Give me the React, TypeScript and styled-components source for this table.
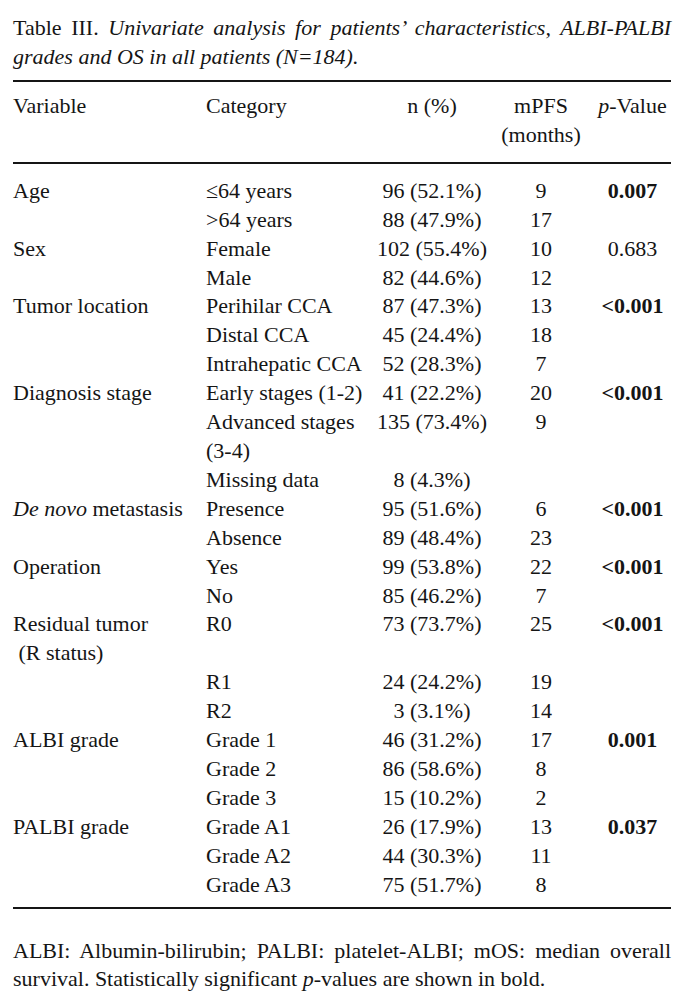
import React from 'react';
import styled, { createGlobalStyle } from 'styled-components';

const GlobalStyle = createGlobalStyle`
  html, body {
    margin: 0;
    padding: 0;
    background: #ffffff;
  }
  body {
    font-family: "Liberation Serif", "Times New Roman", serif;
    color: #151515;
  }
`;

interface Row {
  category: React.ReactNode;
  n: string;
  mpfs: string;
}

interface Group {
  variable: React.ReactNode;
  p?: string;
  significant?: boolean;
  rows: Row[];
}

const groups: Group[] = [
  {
    variable: 'Age',
    p: '0.007',
    significant: true,
    rows: [
      { category: '≤64 years', n: '96 (52.1%)', mpfs: '9' },
      { category: '>64 years', n: '88 (47.9%)', mpfs: '17' },
    ],
  },
  {
    variable: 'Sex',
    p: '0.683',
    rows: [
      { category: 'Female', n: '102 (55.4%)', mpfs: '10' },
      { category: 'Male', n: '82 (44.6%)', mpfs: '12' },
    ],
  },
  {
    variable: 'Tumor location',
    p: '<0.001',
    significant: true,
    rows: [
      { category: 'Perihilar CCA', n: '87 (47.3%)', mpfs: '13' },
      { category: 'Distal CCA', n: '45 (24.4%)', mpfs: '18' },
      { category: 'Intrahepatic CCA', n: '52 (28.3%)', mpfs: '7' },
    ],
  },
  {
    variable: 'Diagnosis stage',
    p: '<0.001',
    significant: true,
    rows: [
      { category: 'Early stages (1-2)', n: '41 (22.2%)', mpfs: '20' },
      { category: 'Advanced stages (3-4)', n: '135 (73.4%)', mpfs: '9' },
      { category: 'Missing data', n: '8 (4.3%)', mpfs: '' },
    ],
  },
  {
    variable: (
      <>
        <em>De novo</em> metastasis
      </>
    ),
    p: '<0.001',
    significant: true,
    rows: [
      { category: 'Presence', n: '95 (51.6%)', mpfs: '6' },
      { category: 'Absence', n: '89 (48.4%)', mpfs: '23' },
    ],
  },
  {
    variable: 'Operation',
    p: '<0.001',
    significant: true,
    rows: [
      { category: 'Yes', n: '99 (53.8%)', mpfs: '22' },
      { category: 'No', n: '85 (46.2%)', mpfs: '7' },
    ],
  },
  {
    variable: (
      <>
        Residual tumor
        <br />
        {'\u00a0(R status)'}
      </>
    ),
    p: '<0.001',
    significant: true,
    rows: [
      { category: 'R0', n: '73 (73.7%)', mpfs: '25' },
      { category: 'R1', n: '24 (24.2%)', mpfs: '19' },
      { category: 'R2', n: '3 (3.1%)', mpfs: '14' },
    ],
  },
  {
    variable: 'ALBI grade',
    p: '0.001',
    significant: true,
    rows: [
      { category: 'Grade 1', n: '46 (31.2%)', mpfs: '17' },
      { category: 'Grade 2', n: '86 (58.6%)', mpfs: '8' },
      { category: 'Grade 3', n: '15 (10.2%)', mpfs: '2' },
    ],
  },
  {
    variable: 'PALBI grade',
    p: '0.037',
    significant: true,
    rows: [
      { category: 'Grade A1', n: '26 (17.9%)', mpfs: '13' },
      { category: 'Grade A2', n: '44 (30.3%)', mpfs: '11' },
      { category: 'Grade A3', n: '75 (51.7%)', mpfs: '8' },
    ],
  },
];

const Page = styled.div`
  width: 658px;
  padding: 13px 18px 0 13px;
  font-size: 22px;
`;

const Caption = styled.p`
  margin: 0 0 9px;
  line-height: 29px;
  text-align: justify;

  em {
    font-style: italic;
  }
`;

const Table = styled.table`
  width: 100%;
  border-collapse: collapse;
  table-layout: fixed;
  border-top: 2px solid #151515;
  border-bottom: 2px solid #151515;
`;

const HeadRow = styled.tr`
  border-bottom: 2px solid #151515;
`;

const Cell = styled.td<{ $align?: 'left' | 'center'; $bold?: boolean; $pad?: string }>`
  padding: ${(p) => p.$pad ?? '0'};
  text-align: ${(p) => p.$align ?? 'left'};
  font-weight: ${(p) => (p.$bold ? 700 : 400)};
  vertical-align: top;
  line-height: 28.9px;
  white-space: normal;
`;

const HeadCell = styled(Cell).attrs({ as: 'th' })`
  font-weight: 400;
`;

const Footnote = styled.p`
  margin: 28px 0 0;
  line-height: 28px;
  text-align: justify;
`;

export default function App() {
  return (
    <>
      <GlobalStyle />
      <Page>
        <Caption>
          Table III. <em>Univariate analysis for patients’ characteristics, ALBI-PALBI grades and OS in all patients (N=184).</em>
        </Caption>
        <Table>
          <colgroup>
            <col style={{ width: 193 }} />
            <col style={{ width: 170 }} />
            <col style={{ width: 112 }} />
            <col style={{ width: 106 }} />
            <col style={{ width: 77 }} />
          </colgroup>
          <thead>
            <HeadRow>
              <HeadCell $pad="10px 0 12px">Variable</HeadCell>
              <HeadCell $pad="10px 0 12px">Category</HeadCell>
              <HeadCell $pad="10px 0 12px" $align="center">n (%)</HeadCell>
              <HeadCell $pad="10px 0 12px" $align="center">
                mPFS
                <br />
                (months)
              </HeadCell>
              <HeadCell $pad="10px 0 12px" $align="center">
                <em>p</em>-Value
              </HeadCell>
            </HeadRow>
          </thead>
          <tbody>
            {groups.map((g, gi) =>
              g.rows.map((r, ri) => {
                const first = gi === 0 && ri === 0;
                const last = gi === groups.length - 1 && ri === g.rows.length - 1;
                const pad = `${first ? 13 : 0}px 0 ${last ? 8 : 0}px`;
                return (
                  <tr key={`${gi}-${ri}`}>
                    <Cell $pad={pad}>{ri === 0 ? g.variable : null}</Cell>
                    <Cell $pad={pad}>{r.category}</Cell>
                    <Cell $pad={pad} $align="center">{r.n}</Cell>
                    <Cell $pad={pad} $align="center">{r.mpfs}</Cell>
                    <Cell $pad={pad} $align="center" $bold={g.significant}>
                      {ri === 0 ? g.p : null}
                    </Cell>
                  </tr>
                );
              })
            )}
          </tbody>
        </Table>
        <Footnote>
          ALBI: Albumin-bilirubin; PALBI: platelet-ALBI; mOS: median overall survival. Statistically significant{' '}
          <em>p</em>-values are shown in bold.
        </Footnote>
      </Page>
    </>
  );
}
